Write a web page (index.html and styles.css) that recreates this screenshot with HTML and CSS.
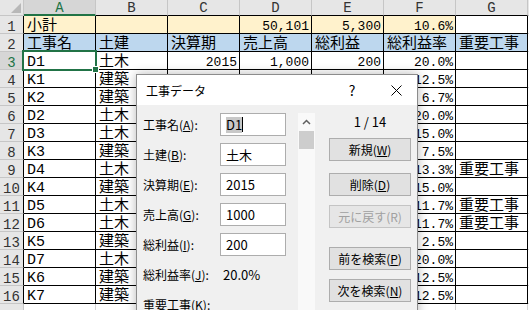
FILE: index.html
```html
<!DOCTYPE html>
<html lang="ja">
<head>
  <meta charset="UTF-8">
  <title>工事データ</title>
  <link rel="stylesheet" href="styles.css">
</head>
<body>
  <div class="sheet">
    <div class="row head">
      <div class="corner"></div>
      <div class="col on">A</div><div class="col">B</div><div class="col">C</div><div class="col">D</div><div class="col">E</div><div class="col">F</div><div class="col">G</div><div class="rest"></div>
    </div>
    <div class="row total">
      <div class="rh">1</div><div>小計</div><div></div><div></div><div class="n">50,101</div><div class="n">5,300</div><div class="n">10.6%</div><div class="plain"></div><div class="rest"></div>
    </div>
    <div class="row title">
      <div class="rh">2</div><div>工事名</div><div>土建</div><div>決算期</div><div>売上高</div><div>総利益</div><div>総利益率</div><div>重要工事</div><div class="rest"></div>
    </div>
    <div class="row">
      <div class="rh on">3</div><div class="active">D1</div><div>土木</div><div class="n">2015</div><div class="n">1,000</div><div class="n">200</div><div class="n">20.0%</div><div></div><div class="rest"></div>
    </div>
    <div class="row">
      <div class="rh">4</div><div>K1</div><div>建築</div><div class="n">2015</div><div class="n">4,000</div><div class="n">500</div><div class="n">12.5%</div><div></div><div class="rest"></div>
    </div>
    <div class="row">
      <div class="rh">5</div><div>K2</div><div>建築</div><div class="n">2015</div><div class="n">3,000</div><div class="n">200</div><div class="n">6.7%</div><div></div><div class="rest"></div>
    </div>
    <div class="row">
      <div class="rh">6</div><div>D2</div><div>土木</div><div class="n">2016</div><div class="n">2,500</div><div class="n">500</div><div class="n">20.0%</div><div></div><div class="rest"></div>
    </div>
    <div class="row">
      <div class="rh">7</div><div>D3</div><div>土木</div><div class="n">2016</div><div class="n">2,000</div><div class="n">300</div><div class="n">15.0%</div><div></div><div class="rest"></div>
    </div>
    <div class="row">
      <div class="rh">8</div><div>K3</div><div>建築</div><div class="n">2016</div><div class="n">4,000</div><div class="n">300</div><div class="n">7.5%</div><div></div><div class="rest"></div>
    </div>
    <div class="row">
      <div class="rh">9</div><div>D4</div><div>土木</div><div class="n">2016</div><div class="n">6,000</div><div class="n">800</div><div class="n">13.3%</div><div>重要工事</div><div class="rest"></div>
    </div>
    <div class="row">
      <div class="rh">10</div><div>K4</div><div>建築</div><div class="n">2017</div><div class="n">2,000</div><div class="n">300</div><div class="n">15.0%</div><div></div><div class="rest"></div>
    </div>
    <div class="row">
      <div class="rh">11</div><div>D5</div><div>土木</div><div class="n">2017</div><div class="n">6,000</div><div class="n">700</div><div class="n">11.7%</div><div>重要工事</div><div class="rest"></div>
    </div>
    <div class="row">
      <div class="rh">12</div><div>D6</div><div>土木</div><div class="n">2017</div><div class="n">6,000</div><div class="n">700</div><div class="n">11.7%</div><div>重要工事</div><div class="rest"></div>
    </div>
    <div class="row">
      <div class="rh">13</div><div>K5</div><div>建築</div><div class="n">2017</div><div class="n">2,000</div><div class="n">50</div><div class="n">2.5%</div><div></div><div class="rest"></div>
    </div>
    <div class="row">
      <div class="rh">14</div><div>D7</div><div>土木</div><div class="n">2018</div><div class="n">1,500</div><div class="n">300</div><div class="n">20.0%</div><div></div><div class="rest"></div>
    </div>
    <div class="row">
      <div class="rh">15</div><div>K6</div><div>建築</div><div class="n">2018</div><div class="n">4,000</div><div class="n">500</div><div class="n">12.5%</div><div></div><div class="rest"></div>
    </div>
    <div class="row">
      <div class="rh">16</div><div>K7</div><div>建築</div><div class="n">2018</div><div class="n">4,000</div><div class="n">500</div><div class="n">12.5%</div><div></div><div class="rest"></div>
    </div>
    <div class="row empty">
      <div class="rh"></div><div></div><div></div><div></div><div></div><div></div><div></div><div></div><div class="rest"></div>
    </div>
  </div>

  <div class="dialog">
    <div class="titlebar">
      <span class="caption">工事データ</span>
      <span class="tb-btn">?</span>
      <span class="tb-btn close">
        <svg width="11" height="11" viewBox="0 0 11 11"><path d="M0.5 0.5 L10.5 10.5 M10.5 0.5 L0.5 10.5" stroke="#000" stroke-width="1" fill="none"/></svg>
      </span>
    </div>
    <div class="form">
      <div class="fields">
        <div class="field"><label>工事名(<u>A</u>):</label><div class="box"><span class="hl">D1</span><span class="caret"></span></div></div>
        <div class="field"><label>土建(<u>B</u>):</label><div class="box">土木</div></div>
        <div class="field"><label>決算期(<u>E</u>):</label><div class="box">2015</div></div>
        <div class="field"><label>売上高(<u>G</u>):</label><div class="box">1000</div></div>
        <div class="field"><label>総利益(<u>I</u>):</label><div class="box">200</div></div>
        <div class="field"><label>総利益率(<u>J</u>):</label><div class="value">20.0%</div></div>
        <div class="field"><label>重要工事(<u>K</u>):</label></div>
      </div>
      <div class="scroll">
        <div class="arrow">
          <svg width="9" height="6" viewBox="0 0 9 6"><path d="M1 5 L4.5 1.5 L8 5" stroke="#606060" stroke-width="1.5" fill="none"/></svg>
        </div>
        <div class="thumb"></div>
      </div>
      <div class="actions">
        <div class="counter">1 / 14</div>
        <button class="btn">新規(<u>W</u>)</button>
        <button class="btn gap-s">削除(<u>D</u>)</button>
        <button class="btn gap-xs" disabled>元に戻す(R)</button>
        <button class="btn gap-l">前を検索(<u>P</u>)</button>
        <button class="btn gap-xs">次を検索(<u>N</u>)</button>
      </div>
    </div>
  </div>
</body>
</html>
```

FILE: styles.css
```css
body {
  margin: 0;
  background: #fff;
  overflow: hidden;
  font-family: "Liberation Mono", "Noto Sans CJK JP", monospace;
}

/* spreadsheet */
.sheet {
  width: 529px;
}
.row {
  display: flex;
  height: 18px;
  font-size: 15px;
  color: #000;
}
.row > div {
  flex: none;
  box-sizing: border-box;
  width: 72px;
  height: 18px;
  padding: 4px 3px 0;
  line-height: 14px;
  white-space: nowrap;
  overflow: hidden;
  border-right: 1px solid #000;
  border-bottom: 1px solid #000;
}
.row > .rest {
  flex: 1;
  width: auto;
  border-right: none;
  border-bottom: 1px solid #d4d4d4;
}
.row > .n {
  text-align: right;
  padding-right: 2px;
  font-size: 13px;
}
.row > .rh {
  width: 24px;
  padding: 4px 0 0;
  text-align: center;
  color: #333;
  font-size: 14px;
  background: #e6e6e6;
  border-bottom-color: #c6c6c6;
}
.row > .rh.on {
  color: #217346;
  background: #d6d6d6;
}

.head {
  height: 16px;
}
.head > div {
  height: 16px;
  padding: 0;
  line-height: 16px;
  text-align: center;
  font-size: 14px;
  color: #333;
  background: #e6e6e6;
  border-right-color: #c6c6c6;
}
.head > .corner {
  position: relative;
  width: 24px;
  border-bottom-color: #c6c6c6;
}
.corner::after {
  content: "";
  position: absolute;
  right: 2px;
  bottom: 2px;
  border-left: 10px solid transparent;
  border-bottom: 10px solid #b8b8b8;
}
.head > .col.on {
  color: #217346;
  background: #d6d6d6;
  border-bottom: 2px solid #217346;
}
.head > .rest {
  background: #e6e6e6;
  border-bottom-color: #c6c6c6;
}

.total > div {
  background: #fff2cc;
}
.title > div {
  background: #bdd7ee;
}
.total > .rh,
.title > .rh {
  background: #e6e6e6;
}
.total > .plain,
.total > .rest,
.title > .rest {
  background: #fff;
}

.empty > div {
  border-color: #d4d4d4;
}
.empty > .rh {
  border-right-color: #c6c6c6;
  border-bottom: none;
}

.row > .active {
  position: relative;
  overflow: visible;
}
.active::after {
  content: "";
  position: absolute;
  left: -2px;
  top: -2px;
  width: 71px;
  height: 17px;
  border: 2px solid #217346;
}
.active::before {
  content: "";
  position: absolute;
  right: -4px;
  bottom: -4px;
  width: 5px;
  height: 5px;
  background: #217346;
  border: 1px solid #fff;
  z-index: 1;
}

/* data form dialog */
.dialog {
  position: absolute;
  left: 136px;
  top: 74px;
  width: 282px;
  height: 260px;
  box-sizing: border-box;
  background: #f0f0f0;
  border: 1px solid #8c8c8c;
  box-shadow: 0 0 10px rgba(0, 0, 0, 0.28);
  font-family: "Noto Sans CJK JP", sans-serif;
  font-size: 12px;
  color: #000;
  z-index: 2;
}
.titlebar {
  display: flex;
  align-items: center;
  height: 30px;
  background: #fff;
}
.caption {
  flex: 1;
  padding-left: 9px;
}
.tb-btn {
  width: 46px;
  height: 30px;
  font-size: 14px;
  display: flex;
  justify-content: center;
  align-items: center;
}
.tb-btn.close {
  width: 42px;
}

.form {
  display: flex;
  padding: 8px 6px 0;
}
.fields {
  width: 143px;
}
.field {
  display: flex;
  align-items: center;
  height: 23px;
  margin-bottom: 7px;
}
.field label {
  width: 77px;
  flex: none;
  white-space: nowrap;
}
.box {
  box-sizing: border-box;
  width: 66px;
  height: 23px;
  padding: 0 5px;
  background: #fff;
  border: 1px solid #adadad;
  font-size: 13px;
  line-height: 21px;
  display: flex;
  align-items: center;
}
.hl {
  background: #c8c8c8;
  line-height: 16px;
}
.caret {
  display: inline-block;
  width: 1px;
  height: 15px;
  background: #000;
}
.value {
  padding-left: 3px;
  font-size: 13px;
}

.scroll {
  width: 17px;
  height: 200px;
  margin-left: 12px;
  background: #f9f9f9;
}
.arrow {
  height: 18px;
  display: flex;
  justify-content: center;
  align-items: center;
}
.thumb {
  height: 18px;
  margin: 0 1px;
  background: #cdcdcd;
}

.actions {
  width: 82px;
  margin-left: 14px;
  display: flex;
  flex-direction: column;
}
.counter {
  height: 18px;
  line-height: 18px;
  text-align: center;
  font-size: 13px;
  margin-bottom: 7px;
}
.btn {
  box-sizing: border-box;
  width: 82px;
  height: 23px;
  padding: 0;
  font: inherit;
  color: #000;
  background: #e1e1e1;
  border: 1px solid #adadad;
}
.btn:disabled {
  color: #a0a0a0;
  background: #e6e6e6;
  border-color: #c4c4c4;
}
.gap-s {
  margin-top: 12px;
}
.gap-xs {
  margin-top: 9px;
}
.gap-l {
  margin-top: 19px;
}
```
